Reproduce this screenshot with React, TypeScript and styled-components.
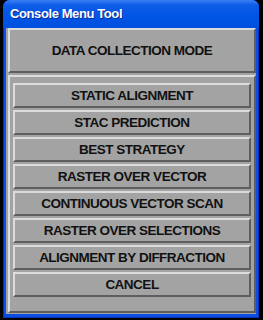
import styled, { createGlobalStyle } from "styled-components";

const GlobalStyle = createGlobalStyle`
  html, body {
    margin: 0;
    padding: 0;
    background: #000;
  }
  body {
    font-family: "Liberation Sans", Arial, Helvetica, sans-serif;
  }
`;

const Screen = styled.div`
  width: 263px;
  height: 320px;
  box-sizing: border-box;
  padding: 0 4px 2px 3px;
  background: #000;
  display: flex;
`;

const Window = styled.div`
  flex: 1;
  display: flex;
  flex-direction: column;
  background: #0a4fe2;
  border-radius: 7px 7px 0 0;
  box-shadow: inset 1px 0 0 #0832b8, inset -1px 0 0 #0832b8, inset 0 -1px 0 #0832b8;
  overflow: hidden;
`;

const TitleBar = styled.div`
  height: 28px;
  flex: none;
  display: flex;
  align-items: center;
  padding: 0 0 1px 7px;
  box-sizing: border-box;
  background: linear-gradient(#3a80f5 0%, #0f5ce8 18%, #0055e5 60%, #0050dc 100%);
  color: #fff;
  font-weight: bold;
  font-size: 13px;
  letter-spacing: -0.4px;
  text-shadow: 1px 1px 0 #0b2a9a;
`;

const Body = styled.div`
  flex: 1;
  margin: 0 3px 4px 3px;
  background: #a3a3a3;
  display: flex;
  flex-direction: column;
  gap: 2px;
  padding: 0 0 1px 2px;
`;

const raised = `
  border-style: solid;
  border-width: 2px;
  border-color: #dcdcdc #5e5e5e #5e5e5e #dcdcdc;
  background: #a3a3a3;
  box-sizing: border-box;
`;

const Header = styled.div`
  ${raised}
  height: 45px;
  display: flex;
  align-items: center;
  justify-content: center;
  font-weight: bold;
  font-size: 13.5px;
  letter-spacing: -0.5px;
  color: #111;
`;

const Panel = styled.div`
  ${raised}
  flex: 1;
  display: flex;
  flex-direction: column;
  gap: 2px;
  padding: 6px 3px 0 3px;
`;

const MenuButton = styled.button`
  ${raised}
  height: 25px;
  padding: 0;
  margin: 0;
  font-family: "Liberation Sans", Arial, Helvetica, sans-serif;
  font-weight: bold;
  font-size: 13.5px;
  letter-spacing: -0.5px;
  color: #111;
  cursor: pointer;
  &:active {
    border-color: #5e5e5e #dcdcdc #dcdcdc #5e5e5e;
  }
`;

const items = [
  "STATIC ALIGNMENT",
  "STAC PREDICTION",
  "BEST STRATEGY",
  "RASTER OVER VECTOR",
  "CONTINUOUS VECTOR SCAN",
  "RASTER OVER SELECTIONS",
  "ALIGNMENT BY DIFFRACTION",
  "CANCEL",
];

export default function App() {
  return (
    <>
      <GlobalStyle />
      <Screen>
        <Window>
          <TitleBar>Console Menu Tool</TitleBar>
          <Body>
            <Header>DATA COLLECTION MODE</Header>
            <Panel>
              {items.map((label) => (
                <MenuButton key={label}>{label}</MenuButton>
              ))}
            </Panel>
          </Body>
        </Window>
      </Screen>
    </>
  );
}
